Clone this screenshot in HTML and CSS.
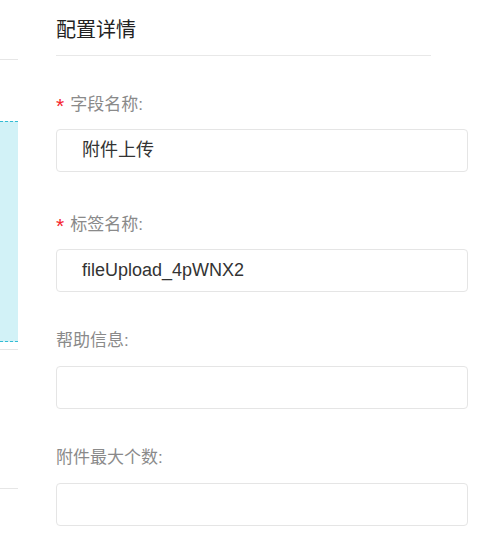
FILE: index.html
```html
<!DOCTYPE html>
<html lang="zh-CN">
<head>
<meta charset="utf-8">
<title>配置详情</title>
<link rel="stylesheet" href="styles.css">
</head>
<body>
<div class="layout">
  <div class="canvas">
    <div class="canvas-row canvas-top"></div>
    <div class="drop-zone"></div>
    <div class="canvas-row canvas-mid"></div>
    <div class="canvas-row canvas-bottom"></div>
  </div>
  <div class="panel">
    <div class="panel-header">配置详情</div>
    <div class="form">
      <div class="form-item">
        <div class="label required"><span class="star">*</span>字段名称:</div>
        <div class="input">附件上传</div>
      </div>
      <div class="form-item">
        <div class="label required"><span class="star">*</span>标签名称:</div>
        <div class="input">fileUpload_4pWNX2</div>
      </div>
      <div class="form-item">
        <div class="label">帮助信息:</div>
        <div class="input"></div>
      </div>
      <div class="form-item">
        <div class="label">附件最大个数:</div>
        <div class="input"></div>
      </div>
    </div>
  </div>
</div>
</body>
</html>
```
FILE: styles.css
```css
html, body {
  margin: 0;
  padding: 0;
  background: #ffffff;
}

body {
  font-family: "Liberation Sans", "Noto Sans CJK SC", sans-serif;
  color: #333333;
  overflow: hidden;
}

.layout {
  display: flex;
  gap: 38px;
  height: 538px;
}

.canvas {
  width: 18px;
  flex: none;
  display: flex;
  flex-direction: column;
}

.canvas-row {
  border-bottom: 1px solid #e6e6e6;
}

.canvas-top {
  height: 59px;
}

.drop-zone {
  margin-top: 61px;
  height: 219px;
  background: #d2f2f7;
  border-top: 1px dashed #33bcd4;
  border-bottom: 1px dashed #33bcd4;
}

.canvas-mid {
  margin-top: 7px;
  height: 0;
}

.canvas-bottom {
  height: 138px;
}

.panel {
  width: 412px;
  flex: none;
}

.panel-header {
  width: 375px;
  padding-top: 18px;
  padding-bottom: 13px;
  line-height: 24px;
  font-size: 20px;
  color: #222222;
  border-bottom: 1px solid #e8e8e8;
  margin-bottom: 34px;
}

.form-item {
  margin-bottom: 38px;
}

.label {
  font-size: 17px;
  line-height: 22px;
  height: 22px;
  color: #8a8a8a;
  margin-bottom: 14px;
}

.label.required {
  padding-top: 4px;
  margin-bottom: 13px;
}

.star {
  color: #f5222d;
  font-family: "Liberation Sans", sans-serif;
  font-size: 21px;
  line-height: 22px;
  margin-right: 6px;
  vertical-align: -3px;
}

.input {
  box-sizing: border-box;
  height: 43px;
  border: 1px solid #e5e5e5;
  border-radius: 4px;
  padding-left: 25px;
  font-size: 18px;
  line-height: 41px;
  color: #333333;
}
```
